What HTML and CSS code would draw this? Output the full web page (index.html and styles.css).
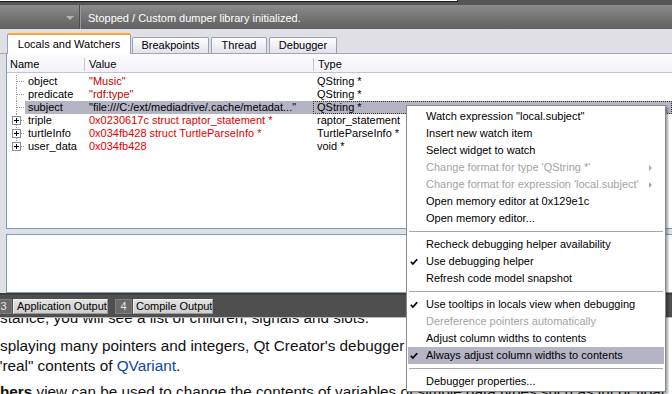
FILE: index.html
```html
<!DOCTYPE html>
<html>
<head>
<meta charset="utf-8">
<link rel="stylesheet" href="styles.css">
</head>
<body>
<div class="topstrip"><div class="topbox"></div></div>
<div class="toolbar">
  <div class="combo"><span class="arrow"></span></div>
  <div class="vsep"></div>
  <span class="status">Stopped / Custom dumper library initialized.</span>
</div>
<div class="tabbar">
  <div class="tab active">Locals and Watchers</div>
  <div class="tab t-bp">Breakpoints</div>
  <div class="tab t-th">Thread</div>
  <div class="tab t-db">Debugger</div>
</div>
<div class="dock">
  <div class="tree">
    <div class="hdr">
      <div class="hc c1">Name</div>
      <div class="hc c2">Value</div>
      <div class="hc c3">Type</div>
    </div>
    <div class="rows">
      <div class="row">
        <div class="nmcell"><svg class="br" width="18" height="13" viewBox="0 0 18 13"><line x1="9.5" y1="0" x2="9.5" y2="13" class="dot"/><line x1="10" y1="6.5" x2="18" y2="6.5" class="dot"/></svg><span class="nm">object</span></div>
        <div class="val str">"Music"</div>
        <div class="typ">QString *</div>
      </div>
      <div class="row">
        <div class="nmcell"><svg class="br" width="18" height="13" viewBox="0 0 18 13"><line x1="9.5" y1="0" x2="9.5" y2="13" class="dot"/><line x1="10" y1="6.5" x2="18" y2="6.5" class="dot"/></svg><span class="nm">predicate</span></div>
        <div class="val str">"rdf:type"</div>
        <div class="typ">QString *</div>
      </div>
      <div class="row sel">
        <div class="nmcell"><svg class="br" width="18" height="13" viewBox="0 0 18 13"><line x1="9.5" y1="0" x2="9.5" y2="13" class="dot"/><line x1="10" y1="6.5" x2="18" y2="6.5" class="dot"/></svg><span class="nm">subject</span></div>
        <div class="val">"file:///C:/ext/mediadrive/.cache/metadat..."</div>
        <div class="typ">QString *</div>
      </div>
      <div class="row">
        <div class="nmcell"><svg class="br" width="18" height="13" viewBox="0 0 18 13"><line x1="9.5" y1="0" x2="9.5" y2="2" class="dot"/><line x1="9.5" y1="11" x2="9.5" y2="13" class="dot"/><line x1="14" y1="6.5" x2="18" y2="6.5" class="dot"/><rect x="5.5" y="2.5" width="8" height="8" class="box"/><line x1="7" y1="6.5" x2="12" y2="6.5" class="plus"/><line x1="9.5" y1="4" x2="9.5" y2="9" class="plus"/></svg><span class="nm">triple</span></div>
        <div class="val ptr">0x0230617c struct raptor_statement *</div>
        <div class="typ">raptor_statement</div>
      </div>
      <div class="row">
        <div class="nmcell"><svg class="br" width="18" height="13" viewBox="0 0 18 13"><line x1="9.5" y1="0" x2="9.5" y2="2" class="dot"/><line x1="9.5" y1="11" x2="9.5" y2="13" class="dot"/><line x1="14" y1="6.5" x2="18" y2="6.5" class="dot"/><rect x="5.5" y="2.5" width="8" height="8" class="box"/><line x1="7" y1="6.5" x2="12" y2="6.5" class="plus"/><line x1="9.5" y1="4" x2="9.5" y2="9" class="plus"/></svg><span class="nm">turtleInfo</span></div>
        <div class="val ptr">0x034fb428 struct TurtleParseInfo *</div>
        <div class="typ">TurtleParseInfo *</div>
      </div>
      <div class="row">
        <div class="nmcell"><svg class="br" width="18" height="13" viewBox="0 0 18 13"><line x1="9.5" y1="0" x2="9.5" y2="2" class="dot"/><line x1="14" y1="6.5" x2="18" y2="6.5" class="dot"/><rect x="5.5" y="2.5" width="8" height="8" class="box"/><line x1="7" y1="6.5" x2="12" y2="6.5" class="plus"/><line x1="9.5" y1="4" x2="9.5" y2="9" class="plus"/></svg><span class="nm">user_data</span></div>
        <div class="val ptr">0x034fb428</div>
        <div class="typ">void *</div>
      </div>
    </div>
  </div>
  <div class="gap"></div>
  <div class="out"></div>
</div>
<div class="outbar">
  <div class="obtn first"><span class="num">3</span><span class="lbl l-app">Application Output</span></div>
  <div class="obtn"><span class="num">4</span><span class="lbl l-cmp">Compile Output</span></div>
</div>
<div class="doc">
  <p class="p1">stance, you will see a list of children, signals and slots.</p>
  <p>splaying many pointers and integers, Qt Creator's debugger has the ability to show the data<br><span class="shift">"real" contents of <a class="lnk">QVariant</a>.</span></p>
  <p><b>hers</b> view can be used to change the contents of variables of simple data types such as int or float</p>
</div>

<div class="menu">
  <div class="mi"><span class="ic"></span><span>Watch expression "local.subject"</span></div>
  <div class="mi"><span class="ic"></span><span>Insert new watch item</span></div>
  <div class="mi"><span class="ic"></span><span>Select widget to watch</span></div>
  <div class="mi dis"><span class="ic"></span><span>Change format for type 'QString *'</span><span class="sub"></span></div>
  <div class="mi dis"><span class="ic"></span><span>Change format for expression 'local.subject'</span><span class="sub"></span></div>
  <div class="mi"><span class="ic"></span><span>Open memory editor at 0x129e1c</span></div>
  <div class="mi"><span class="ic"></span><span>Open memory editor...</span></div>
  <div class="msep"></div>
  <div class="mi"><span class="ic"></span><span>Recheck debugging helper availability</span></div>
  <div class="mi"><span class="ic"><svg width="8" height="8" viewBox="0 0 8 8"><polyline points="0.8,3.8 2.9,6.1 7.2,1.2" class="chk"/></svg></span><span>Use debugging helper</span></div>
  <div class="mi"><span class="ic"></span><span>Refresh code model snapshot</span></div>
  <div class="msep"></div>
  <div class="mi"><span class="ic"><svg width="8" height="8" viewBox="0 0 8 8"><polyline points="0.8,3.8 2.9,6.1 7.2,1.2" class="chk"/></svg></span><span>Use tooltips in locals view when debugging</span></div>
  <div class="mi dis"><span class="ic"></span><span>Dereference pointers automatically</span></div>
  <div class="mi"><span class="ic"></span><span>Adjust column widths to contents</span></div>
  <div class="mi hl"><span class="ic"><svg width="8" height="8" viewBox="0 0 8 8"><polyline points="0.8,3.8 2.9,6.1 7.2,1.2" class="chk"/></svg></span><span>Always adjust column widths to contents</span></div>
  <div class="msep"></div>
  <div class="mi"><span class="ic"></span><span>Debugger properties...</span></div>
</div>
</body>
</html>
```

FILE: styles.css
```css
* { box-sizing: border-box; }
html, body { margin: 0; padding: 0; }
body {
  width: 672px;
  height: 394px;
  overflow: hidden;
  position: relative;
  background: #fff;
  font-family: "Liberation Sans", Arial, sans-serif;
  font-size: 11px;
  color: #000;
}

/* top strip */
.topstrip {
  height: 5px;
  background: #555;
}
.topbox {
  width: 458px;
  height: 2px;
  background: #fff;
  border-bottom: 1px solid #1a1a1a;
  border-right: 1px solid #1a1a1a;
}

/* toolbar */
.toolbar {
  height: 24px;
  display: flex;
  align-items: center;
  background: linear-gradient(#8b8b8b, #606060);
}
.combo {
  width: 79px;
  height: 24px;
  display: flex;
  align-items: center;
  justify-content: flex-end;
  padding-right: 5px;
  padding-top: 1px;
}
.arrow {
  width: 0;
  height: 0;
  border-left: 4px solid transparent;
  border-right: 4px solid transparent;
  border-top: 4px solid #b4b4b4;
}
.vsep {
  width: 2px;
  height: 24px;
  border-left: 1px solid #4c4c4c;
  border-right: 1px solid #999;
}
.status {
  color: #fff;
  margin-left: 7px;
  padding-top: 1px;
}

/* tabs */
.tabbar {
  height: 25px;
  background: #e0dfe6;
  border-bottom: 1px solid #a4a4b2;
  display: flex;
  align-items: flex-end;
  padding-left: 7px;
}
.tab {
  height: 16px;
  line-height: 15px;
  text-align: center;
  border: 1px solid #97a2b6;
  border-bottom: none;
  background: linear-gradient(#fdfdff, #e2e2ec);
  margin-right: 2px;
  border-radius: 2px 2px 0 0;
}
.tab.active {
  width: 124px;
  height: 21px;
  line-height: 18px;
  margin-bottom: -1px;
  margin-right: 0;
  background: #fff;
  border-top: 2px solid #f6a93a;
  border-color: #f6a93a #8fa0b8 #fff #8fa0b8;
  position: relative;
  z-index: 1;
}
.t-bp { width: 77px; margin-left: 1px; }
.t-th { width: 56px; }
.t-db { width: 68px; }

/* dock */
.dock {
  background: #dfdfe6;
  padding-left: 6px;
}
.tree {
  height: 175px;
  background: #fff;
  border-left: 1px solid #7f9db9;
  border-bottom: 1px solid #7f9db9;
}
.hdr {
  height: 19px;
  padding-top: 4px;
  display: grid;
  grid-template-columns: 77px 229px 1fr;
  align-items: start;
  background: linear-gradient(#fcfcfe, #f2f2f8);
  border-bottom: 1px solid #c4c4d0;
}
.hc {
  height: 13px;
  line-height: 13px;
}
.c1 { padding-left: 3px; }
.c2, .c3 {
  border-left: 1px solid #c6c6d0;
  padding-left: 4px;
}
.rows { padding-top: 2px; }
.row {
  height: 13px;
  line-height: 13px;
  display: grid;
  grid-template-columns: 77px 229px 1fr;
  white-space: nowrap;
}
.nmcell {
  display: flex;
  height: 13px;
}
.br { flex: none; display: block; }
.nm { flex: 1; padding-left: 3px; }
.val { padding-left: 5px; overflow: hidden; }
.typ { padding-left: 4px; }
.str { color: #c00000; }
.ptr { color: #e40000; }
.row.sel .nm,
.row.sel .val,
.row.sel .typ { background: #b4b4c4; }
.row.sel .typ {
  outline: 1px dotted #333;
  outline-offset: -1px;
  padding-left: 4px;
}
.dot {
  stroke: #9a9aa4;
  stroke-width: 1;
  stroke-dasharray: 1 1;
}
.box { fill: #fff; stroke: #8a8a9c; stroke-width: 1; }
.plus { stroke: #000; stroke-width: 1; }

.gap { height: 5px; }
.out {
  height: 59px;
  background: #fff;
  border: 1px solid #7f9db9;
  border-right: none;
}

/* output bar */
.outbar {
  height: 25px;
  background: #4f4f4f;
  border-top: 2px solid #3e3e3e;
  border-bottom: 1px solid #bcbcbc;
  display: flex;
  align-items: flex-start;
  padding-top: 4px;
  gap: 7px;
}
.obtn {
  display: flex;
  height: 15px;
  line-height: 13px;
  white-space: nowrap;
}
.obtn.first { margin-left: -5px; }
.num {
  width: 17px;
  text-align: center;
  color: #e4e4e4;
  background: #6a6a6a;
  border: 1px solid #7e7e7e;
  margin-right: 1px;
}
.lbl {
  background: linear-gradient(#e2e2e2, #cfcfcf);
  border: 1px solid #f0f0f0;
  border-right-color: #9a9a9a;
  border-bottom-color: #9a9a9a;
  padding-left: 3px;
  overflow: hidden;
}
.l-app { width: 95px; }
.l-cmp { width: 80px; padding-left: 2px; }

/* document */
.doc {
  height: 76px;
  overflow: hidden;
  font-size: 15.3px;
  color: #111;
}
.doc p {
  margin: 0 0 6px;
  line-height: 20px;
  white-space: nowrap;
}
.doc .p1 { margin-top: -10px; margin-bottom: 8px; }
.doc .shift { margin-left: -3px; }
.lnk { color: #0b46a8; text-decoration: none; }

/* context menu */
.menu {
  position: absolute;
  left: 406px;
  top: 105px;
  width: 260px;
  height: 287px;
  background: #fff;
  border: 1px solid #8a8a8a;
  padding: 2px 1px;
  box-shadow: 2px 2px 2px rgba(0,0,0,0.35);
  z-index: 5;
}
.mi {
  height: 17px;
  line-height: 17px;
  display: flex;
  align-items: center;
  white-space: nowrap;
}
.mi.dis { color: #a3a3a3; }
.mi.hl { background: #b4b4c4; }
.ic {
  width: 18px;
  flex: none;
  padding-left: 2px;
  display: flex;
  align-items: center;
  height: 17px;
}
.ic svg { display: block; margin-top: 1px; }
.chk {
  fill: none;
  stroke: #000;
  stroke-width: 1.7;
}
.sub {
  margin-left: auto;
  margin-right: 12px;
  width: 0;
  height: 0;
  border-left: 3px solid #a8a8a8;
  border-top: 3px solid transparent;
  border-bottom: 3px solid transparent;
}
.msep {
  height: 9px;
  display: flex;
  align-items: center;
  padding: 0 1px;
}
.msep::before {
  content: "";
  display: block;
  width: 100%;
  height: 1px;
  background: #a6a6a6;
}
```
